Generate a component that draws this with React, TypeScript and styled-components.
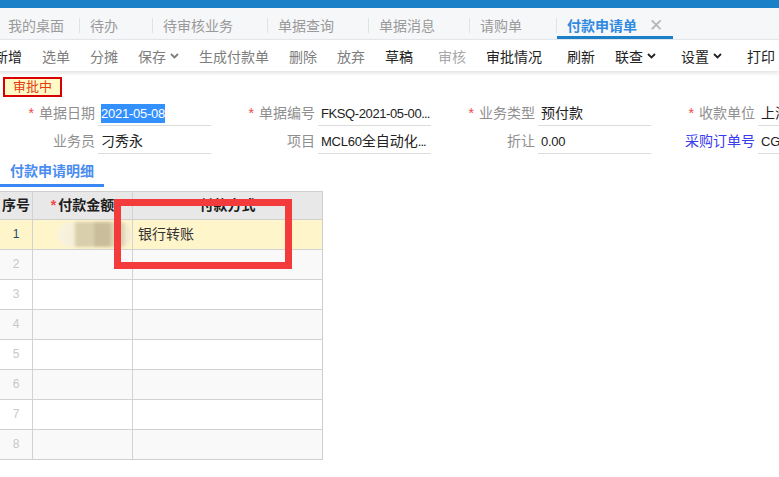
import React from "react";
import styled, { createGlobalStyle } from "styled-components";

const GlobalStyle = createGlobalStyle`
    html, body {
        margin: 0;
        padding: 0;
        background: #fff;
        overflow: hidden;
    }
    body {
        font-family: "Liberation Sans", "Noto Sans CJK SC", sans-serif;
        font-size: 14px;
        color: #222;
    }
`;

const Page = styled.div`
    width: 779px;
    height: 477px;
    overflow: hidden;
    background: #fff;
`;

const TopBar = styled.div`
    height: 8px;
    background: #1a80c8;
`;

const TabBar = styled.div`
    height: 32px;
    display: flex;
    align-items: stretch;
    background: #f6f7f9;
    border-bottom: 1px solid #e6e8ee;
    box-sizing: border-box;
    white-space: nowrap;
`;

const Tab = styled.div<{ $active?: boolean; $first?: boolean }>`
    position: relative;
    display: flex;
    align-items: center;
    gap: 12px;
    padding: ${p => (p.$first ? "3px 15px 0 8px" : p.$active ? "3px 10px 0 10px" : "3px 34px 0 10px")};
    color: ${p => (p.$active ? "#2f8ae0" : "#9a9a9a")};
    font-weight: ${p => (p.$active ? "bold" : "normal")};
    box-shadow: ${p => (p.$active ? "inset 0 -3px 0 #1a80c8" : "none")};
`;

const TabSep = styled.div`
    width: 1px;
    margin: 10px 0 6px;
    background: #e2e2e2;
`;

const CloseMark = styled.span`
    color: #b5b5b5;
    font-weight: normal;
    font-size: 17px;
    line-height: 1;
`;

const Toolbar = styled.div`
    height: 31px;
    display: flex;
    align-items: center;
    margin-left: -16px;
    background: #fff;
    box-shadow: 0 2px 4px rgba(0, 0, 0, 0.12);
    white-space: nowrap;
`;

const ToolButton = styled.div<{ $tone: "dark" | "mid" | "light" }>`
    display: flex;
    align-items: center;
    gap: 4px;
    padding: 0 10px;
    color: ${p => (p.$tone === "dark" ? "#222" : p.$tone === "mid" ? "#7d7d7d" : "#a8a8a8")};
`;

const ToolSep = styled.div`
    width: 1px;
    height: 12px;
    margin: 0 2px 0 3px;
    background: #dcdcdc;
`;

const Caret = () => (
    <svg width="9" height="6" viewBox="0 0 9 6">
        <path d="M1 1 L4.5 4.5 L8 1" fill="none" stroke="currentColor" strokeWidth="1.8" />
    </svg>
);

const Badge = styled.div`
    display: inline-block;
    margin: 6px 0 0 3px;
    width: 59px;
    height: 20px;
    box-sizing: border-box;
    border: 2px solid #d80000;
    background: #fffac6;
    color: #e23a10;
    font-size: 13px;
    line-height: 16px;
    text-align: center;
`;

const FormGrid = styled.div`
    display: grid;
    grid-template-columns: repeat(4, 220px);
    grid-auto-rows: 28px;
    margin-top: 4px;
`;

const Field = styled.div`
    display: flex;
    align-items: stretch;
    height: 25px;
    white-space: nowrap;
`;

const Label = styled.div<{ $link?: boolean }>`
    width: 98px;
    padding-right: 3px;
    box-sizing: border-box;
    text-align: right;
    line-height: 24px;
    color: ${p => (p.$link ? "#3a3af0" : "#8f8f8f")};
`;

const Star = styled.span`
    color: #f04848;
    margin-right: 5px;
`;

const Value = styled.div`
    width: 113px;
    padding-left: 3px;
    box-sizing: border-box;
    border-bottom: 1px solid #dcdcdc;
    line-height: 24px;
    color: #222;
    overflow: hidden;
`;

const Latin = styled.span<{ $tight?: boolean }>`
    font-size: 13px;
    letter-spacing: ${p => (p.$tight ? "-0.4px" : "-0.25px")};
`;

const Dots = styled.span`
    font-size: 13px;
    letter-spacing: -0.9px;
`;

const Selected = styled(Latin)`
    background: #3390ff;
    color: #fff;
    padding: 2px 0;
`;

const SubTab = styled.div`
    width: 104px;
    margin-top: 3px;
    padding: 0 0 0 10px;
    box-sizing: border-box;
    height: 27px;
    line-height: 22px;
    color: #4a8cf0;
    font-weight: bold;
    border-bottom: 3px solid #3a86f2;
`;

const TableWrap = styled.div`
    position: relative;
    margin-top: 4px;
    width: 323px;
`;

const Table = styled.div`
    display: grid;
    grid-template-columns: 32px 100px 190px;
    border-top: 1px solid #cfcfcf;
    border-right: 1px solid #cfcfcf;
    border-bottom: 1px solid #cfcfcf;
`;

const HeadCell = styled.div`
    height: 27px;
    line-height: 27px;
    background: #e8e8e8;
    font-weight: bold;
    color: #1e1e1e;
    text-align: center;
    border-left: 1px solid #d2d2d2;
    border-bottom: 1px solid #cfcfcf;
    white-space: nowrap;
    &:first-child {
        border-left: none;
    }
`;

const Cell = styled.div<{ $bg: string }>`
    height: 29px;
    line-height: 29px;
    background: ${p => p.$bg};
    border-left: 1px solid #d2d2d2;
    border-bottom: 1px solid #d2d2d2;
    padding-left: 5px;
    color: #333;
    white-space: nowrap;
`;

const NumCell = styled(Cell)<{ $on?: boolean }>`
    border-left: none;
    padding-left: 0;
    text-align: center;
    font-size: 12px;
    color: ${p => (p.$on ? "#1b4f70" : "#c8c8c8")};
`;

const LastCell = styled(Cell)`
    border-bottom: none;
`;

const LastNumCell = styled(NumCell)`
    border-bottom: none;
`;

const Blurred = styled.span`
    display: inline-block;
    vertical-align: top;
    margin: 2px 0 0 20px;
    width: 74px;
    height: 25px;
    border-radius: 12px;
    background: linear-gradient(
        90deg,
        #f8f3df 0%,
        #f5efd8 22%,
        #d9cfac 24%,
        #d9cfac 48%,
        #c9bd9b 50%,
        #c9bd9b 70%,
        #ddd3b1 72%,
        #ddd3b1 88%,
        #f3ecd4 92%
    );
    filter: blur(1.5px);
`;

const Annotation = styled.div`
    position: absolute;
    left: 114px;
    top: 8px;
    width: 178px;
    height: 70px;
    box-sizing: border-box;
    border: 7px solid #f43b3b;
    pointer-events: none;
`;

const tabs = ["我的桌面", "待办", "待审核业务", "单据查询", "单据消息", "请购单"];

const tools: { text: string; tone: "dark" | "mid" | "light"; caret?: boolean; sepBefore?: boolean }[] = [
    { text: "新增", tone: "dark" },
    { text: "选单", tone: "mid" },
    { text: "分摊", tone: "mid" },
    { text: "保存", tone: "mid", caret: true },
    { text: "生成付款单", tone: "mid" },
    { text: "删除", tone: "mid" },
    { text: "放弃", tone: "mid" },
    { text: "草稿", tone: "dark" },
    { text: "审核", tone: "light", sepBefore: true },
    { text: "审批情况", tone: "dark" },
    { text: "刷新", tone: "dark", sepBefore: true },
    { text: "联查", tone: "dark", caret: true },
    { text: "设置", tone: "dark", caret: true, sepBefore: true },
    { text: "打印", tone: "dark", caret: true, sepBefore: true },
];

const fields: { label: string; required?: boolean; link?: boolean; value: React.ReactNode }[] = [
    { label: "单据日期", required: true, value: <Selected>2021-05-08</Selected> },
    {
        label: "单据编号",
        required: true,
        value: (
            <>
                <Latin $tight>FKSQ-2021-05-00</Latin>
                <Dots>...</Dots>
            </>
        ),
    },
    { label: "业务类型", required: true, value: "预付款" },
    { label: "收款单位", required: true, value: "上海" },
    { label: "业务员", value: "刁秀永" },
    {
        label: "项目",
        value: (
            <>
                <Latin>MCL60</Latin>全自动化<Dots>...</Dots>
            </>
        ),
    },
    { label: "折让", value: <Latin>0.00</Latin> },
    { label: "采购订单号", link: true, value: <Latin>CG</Latin> },
];

function rowBg(i: number) {
    if (i === 0) return "#fff5cb";
    return i % 2 === 1 ? "#f9f9f9" : "#fff";
}

export default function App() {
    const rows = [1, 2, 3, 4, 5, 6, 7, 8];
    return (
        <Page>
            <GlobalStyle />
            <TopBar />
            <TabBar>
                {tabs.map((t, i) => (
                    <React.Fragment key={t}>
                        <Tab $first={i === 0}>{t}</Tab>
                        <TabSep />
                    </React.Fragment>
                ))}
                <Tab $active>
                    付款申请单
                    <CloseMark>✕</CloseMark>
                </Tab>
            </TabBar>
            <Toolbar>
                {tools.map(t => (
                    <React.Fragment key={t.text}>
                        {t.sepBefore && <ToolSep />}
                        <ToolButton $tone={t.tone}>
                            {t.text}
                            {t.caret && <Caret />}
                        </ToolButton>
                    </React.Fragment>
                ))}
            </Toolbar>
            <Badge>审批中</Badge>
            <FormGrid>
                {fields.map(f => (
                    <Field key={f.label}>
                        <Label $link={f.link}>
                            {f.required && <Star>*</Star>}
                            {f.label}
                        </Label>
                        <Value>{f.value}</Value>
                    </Field>
                ))}
            </FormGrid>
            <SubTab>付款申请明细</SubTab>
            <TableWrap>
                <Table>
                    <HeadCell>序号</HeadCell>
                    <HeadCell>
                        <Star style={{ marginRight: 2 }}>*</Star>付款金额
                    </HeadCell>
                    <HeadCell>付款方式</HeadCell>
                    {rows.map((n, i) => {
                        const last = i === rows.length - 1;
                        const C = last ? LastCell : Cell;
                        const N = last ? LastNumCell : NumCell;
                        return (
                            <React.Fragment key={n}>
                                <N $bg={rowBg(i)} $on={i === 0}>
                                    {n}
                                </N>
                                <C $bg={rowBg(i)}>{i === 0 && <Blurred />}</C>
                                <C $bg={rowBg(i)}>{i === 0 ? "银行转账" : ""}</C>
                            </React.Fragment>
                        );
                    })}
                </Table>
                <Annotation />
            </TableWrap>
        </Page>
    );
}
